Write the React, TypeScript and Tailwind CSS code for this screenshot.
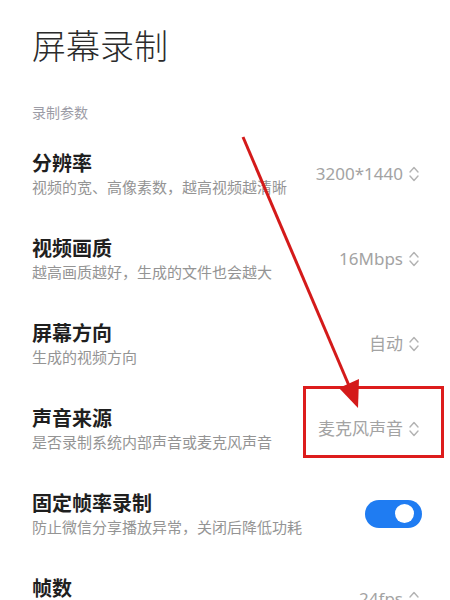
import type { ReactNode } from "react";

const cjk = { fontFamily: '"Noto Sans CJK SC", "Noto Sans", sans-serif' };
const num = { fontFamily: '"Noto Sans", "Noto Sans CJK SC", sans-serif' };

function UpDown() {
  return (
    <svg width="12" height="18" viewBox="0 0 12 18" fill="none" stroke="#b3b3b3" strokeWidth="1.4" strokeLinecap="round" strokeLinejoin="round">
      <polyline points="2,7 6,2.5 10,7" />
      <polyline points="2,11 6,15.5 10,11" />
    </svg>
  );
}

function Row({ title, desc, right }: { title: string; desc: string; right: ReactNode }) {
  return (
    <div className="flex items-center justify-between py-[18px]">
      <div className="flex flex-col">
        <span className="text-[20px] leading-[27px] font-bold text-[#1f1f1f]">{title}</span>
        <span className="text-[15px] leading-[22px] text-[#949494]">{desc}</span>
      </div>
      {right}
    </div>
  );
}

function Value({ text }: { text: string }) {
  return (
    <div className="flex items-center gap-[5px]">
      <span className="text-[17px] text-[#a3a3a3]" style={num}>{text}</span>
      <UpDown />
    </div>
  );
}

export default function App() {
  return (
    <div className="relative h-[600px] w-[450px] overflow-hidden bg-white" style={cjk}>
      <div className="pl-[32px] pr-[30px]">
        <h1 className="pt-[23px] text-[34px] leading-[44px] font-light text-[#2b2b2b]">屏幕录制</h1>
        <p className="mt-[35px] mb-[9px] text-[14px] leading-[20px] text-[#9c9ca6]">录制参数</p>

        <Row title="分辨率" desc="视频的宽、高像素数，越高视频越清晰" right={<Value text="3200*1440" />} />
        <Row title="视频画质" desc="越高画质越好，生成的文件也会越大" right={<Value text="16Mbps" />} />
        <Row title="屏幕方向" desc="生成的视频方向" right={<Value text="自动" />} />
        <Row title="声音来源" desc="是否录制系统内部声音或麦克风声音" right={<Value text="麦克风声音" />} />
        <Row
          title="固定帧率录制"
          desc="防止微信分享播放异常，关闭后降低功耗"
          right={
            <div className="mr-[-2px] flex h-[28px] w-[57px] items-center justify-end rounded-full bg-[#1f7cf2] pr-[8px]">
              <div className="h-[19px] w-[19px] rounded-full bg-white" />
            </div>
          }
        />
        <Row title="帧数" desc={"\u00a0"} right={<Value text="24fps" />} />
      </div>

      {/* annotation */}
      <div className="absolute left-[303px] top-[386px] h-[72px] w-[141px] border-[3px] border-[#dd1c1c]" />
      <svg className="absolute left-0 top-0" width="450" height="600" viewBox="0 0 450 600">
        <line x1="243" y1="137" x2="350" y2="388" stroke="#d41a1a" strokeWidth="3" />
        <polygon points="358,408 339,388 359,379" fill="#d41a1a" />
      </svg>
    </div>
  );
}
